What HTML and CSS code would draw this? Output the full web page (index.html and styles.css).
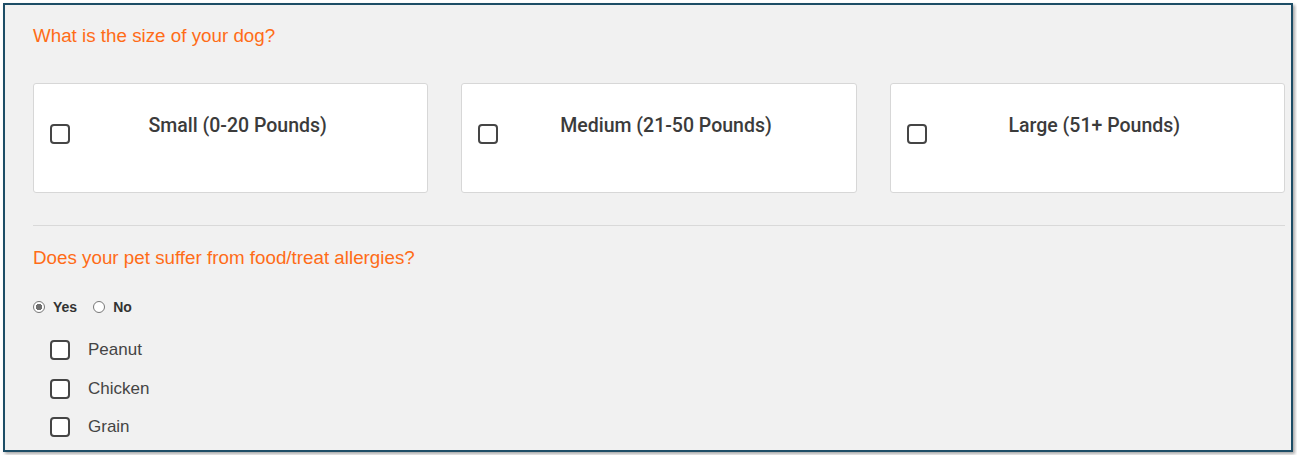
FILE: index.html
```html
<!DOCTYPE html>
<html lang="en">
<head>
    <meta charset="UTF-8">
    <meta name="viewport" content="width=device-width, initial-scale=1.0">
    <title>Pet profile</title>

    <link rel="stylesheet" href="styles.css">
</head>
<body>
    <form class="survey" action="#">
        <div class="question">
            <h2 class="q-title">What is the size of your dog?</h2>
            <div class="size-options">
                <label class="size-card">
                    <input type="checkbox" name="size" value="small">
                    <span class="box"></span>
                    <span class="size-label">Small (0-20 Pounds)</span>
                </label>
                <label class="size-card">
                    <input type="checkbox" name="size" value="medium">
                    <span class="box"></span>
                    <span class="size-label">Medium (21-50 Pounds)</span>
                </label>
                <label class="size-card">
                    <input type="checkbox" name="size" value="large">
                    <span class="box"></span>
                    <span class="size-label">Large (51+ Pounds)</span>
                </label>
            </div>
        </div>

        <div class="divider"></div>

        <div class="question">
            <h2 class="q-title">Does your pet suffer from food/treat allergies?</h2>
            <div class="yes-no">
                <label class="radio"><span class="dot checked"></span>Yes</label>
                <label class="radio"><span class="dot"></span>No</label>
            </div>
            <div class="allergies">
                <label class="allergy"><span class="box"></span>Peanut</label>
                <label class="allergy"><span class="box"></span>Chicken</label>
                <label class="allergy"><span class="box"></span>Grain</label>
            </div>
        </div>
    </form>
</body>
</html>
```

FILE: styles.css
```css
*{
    margin: 0;
    padding: 0;
    box-sizing: border-box;
    font-family: 'Liberation Sans', Arial, sans-serif;
}
body{
    background: #fff;
    height: 455px;
    overflow: hidden;
}
.survey{
    margin: 3px 0 0 3px;
    width: 1290px;
    height: 449px;
    background: #f1f1f1;
    border: 2px solid #1d4d66;
    box-shadow: 2px 2px 3px rgba(0,0,0,0.35);
    padding: 20px 6px 0 28px;
    overflow: hidden;
}
.q-title{
    color: #ff6c17;
    font-size: 18.8px;
    font-weight: 400;
    line-height: 22px;
}
.size-options{
    display: flex;
    gap: 33px;
    margin-top: 36px;
}
.size-card{
    flex: 1;
    height: 110px;
    background: #fff;
    border: 1px solid #d7d7d7;
    border-radius: 3px;
    display: flex;
    align-items: flex-start;
    padding: 32px 22px 0 16px;
}
.size-card input{
    display: none;
}
.box{
    width: 20px;
    height: 20px;
    border: 2px solid #454545;
    border-radius: 4px;
    flex-shrink: 0;
    background: #fff;
}
.size-card .box{
    margin-top: 8px;
}
.size-label{
    flex: 1;
    text-align: center;
    font-family: Roboto, 'Liberation Sans', sans-serif;
    font-size: 19.5px;
    font-weight: 500;
    color: #3b3b3b;
    line-height: 20px;
}
.divider{
    height: 1px;
    background: #d9d9d9;
    margin: 32px 0 21px 0;
}
.yes-no{
    display: flex;
    gap: 16px;
    margin-top: 30px;
}
.radio{
    display: flex;
    align-items: center;
    gap: 8px;
    font-size: 14px;
    font-weight: 700;
    color: #333;
    line-height: 16px;
}
.dot{
    width: 12px;
    height: 12px;
    border: 1px solid #777;
    border-radius: 50%;
    background: #fff;
}
.dot.checked{
    background: radial-gradient(circle, #6f6f6f 0 3px, #fff 3.5px);
}
.allergies{
    display: flex;
    flex-direction: column;
    gap: 18.5px;
    margin-top: 25px;
    padding-left: 17px;
}
.allergy{
    display: flex;
    align-items: center;
    gap: 18px;
    font-size: 17px;
    color: #444;
    line-height: 20px;
}
```
